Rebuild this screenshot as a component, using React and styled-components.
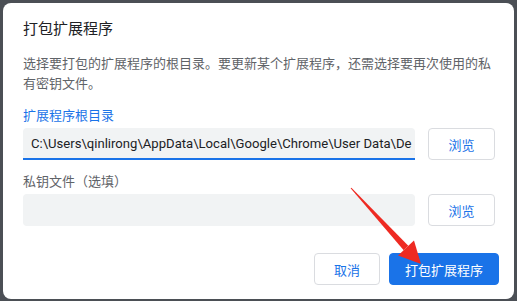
import styled, { createGlobalStyle } from "styled-components";

const GlobalStyle = createGlobalStyle`
  html, body {
    margin: 0;
    padding: 0;
    background: #4b4f55;
  }
  body {
    font-family: "Noto Sans CJK SC", "Noto Sans", sans-serif;
  }
`;

const Screen = styled.div`
  width: 517px;
  height: 301px;
  overflow: hidden;
  padding: 3px 3px 0 3px;
  box-sizing: border-box;
`;

const Dialog = styled.section`
  position: relative;
  width: 511px;
  height: 296px;
  background: #ffffff;
  border-radius: 8px;
  padding: 14px 18px 0 20px;
  box-sizing: border-box;
`;

const Title = styled.h1`
  margin: 0;
  font-size: 15px;
  line-height: 22px;
  font-weight: 400;
  color: #202124;
`;

const Description = styled.p`
  margin: 14px 0 0;
  font-size: 13px;
  line-height: 20px;
  color: #5f6368;
  width: 472px;
`;

const Label = styled.div`
  margin-top: ${(p) => p.$top}px;
  font-size: 13px;
  line-height: 18px;
  color: ${(p) => (p.$active ? "#1a73e8" : "#5f6368")};
`;

const Row = styled.div`
  display: flex;
  gap: 13px;
  margin-top: 4px;
  width: 472px;
`;

const Field = styled.div`
  width: 392px;
  height: 32px;
  box-sizing: border-box;
  background: #f1f3f4;
  border-radius: 4px;
  padding: 0 4px 0 8px;
  border-bottom: 2px solid ${(p) => (p.$focused ? "#1a73e8" : "transparent")};
  border-bottom-left-radius: ${(p) => (p.$focused ? "0" : "4px")};
  border-bottom-right-radius: ${(p) => (p.$focused ? "0" : "4px")};
  font-family: Roboto, "Liberation Sans", sans-serif;
  font-size: 13.1px;
  line-height: 31px;
  color: #202124;
  white-space: nowrap;
  overflow: hidden;
`;

const Button = styled.button`
  height: 32px;
  width: ${(p) => p.$width}px;
  box-sizing: border-box;
  border-radius: 4px;
  font-family: "Noto Sans CJK SC", sans-serif;
  font-size: 13px;
  padding: 0;
  border: 1px solid ${(p) => (p.$primary ? "#1a73e8" : "#dadce0")};
  background: ${(p) => (p.$primary ? "#1a73e8" : "#ffffff")};
  color: ${(p) => (p.$primary ? "#ffffff" : "#1a73e8")};
`;

const Footer = styled.div`
  display: flex;
  justify-content: flex-end;
  gap: 9px;
  margin-top: 27px;
  width: 476px;
`;

const Arrow = styled.svg`
  position: absolute;
  left: -3px;
  top: -3px;
  pointer-events: none;
`;

export default function App() {
  return (
    <>
      <GlobalStyle />
      <Screen>
        <Dialog>
          <Title>打包扩展程序</Title>
          <Description>
            选择要打包的扩展程序的根目录。要更新某个扩展程序，还需选择要再次使用的私有密钥文件。
          </Description>
          <Label $top={13} $active>扩展程序根目录</Label>
          <Row>
            <Field $focused>C:\Users\qinlirong\AppData\Local\Google\Chrome\User Data\De</Field>
            <Button $width={67}>浏览</Button>
          </Row>
          <Label $top={12}>私钥文件（选填）</Label>
          <Row>
            <Field />
            <Button $width={67}>浏览</Button>
          </Row>
          <Footer>
            <Button $width={66}>取消</Button>
            <Button $width={110} $primary>打包扩展程序</Button>
          </Footer>
          <Arrow width="517" height="301" viewBox="0 0 517 301">
            <polygon
              fill="#ee2a22"
              points="350.6,188.3 351.4,187.7 408.3,245.8 403.7,250.2"
            />
            <polygon fill="#ee2a22" points="414,240.5 398,255.5 421,264" />
          </Arrow>
        </Dialog>
      </Screen>
    </>
  );
}
